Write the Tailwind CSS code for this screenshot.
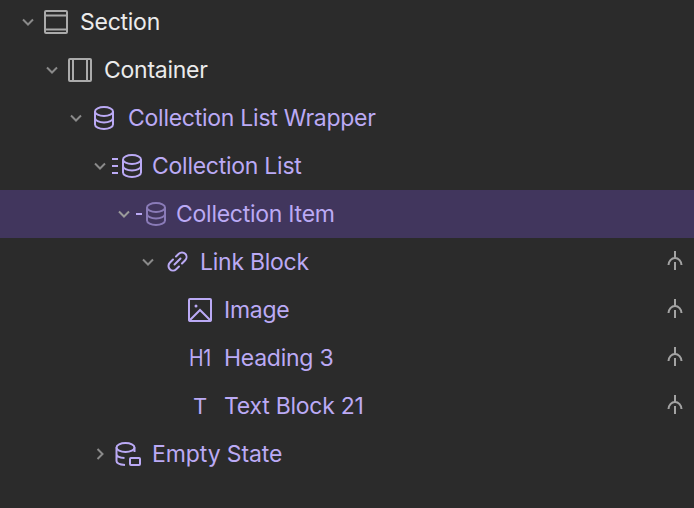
<!DOCTYPE html>
<html lang="en">
<head>
  <meta charset="UTF-8" />
  <title>Navigator</title>
  <script src="https://cdn.jsdelivr.net/npm/@tailwindcss/browser@4"></script>
</head>
<body class="bg-[#2b2b2b] h-[508px] overflow-hidden font-['Inter',sans-serif] text-[23px] tracking-[-0.26px] text-[#bbaaf5]">
  <ul class="-mt-[2px]">
    <!-- Section -->
    <li class="flex items-center h-12 pl-4 text-[#ebebeb]">
      <svg class="w-6 h-6 text-[#8a8a8a]" viewBox="0 0 24 24" fill="none" stroke="currentColor" stroke-width="2"><path d="M7 9.500l5 5 5-5"/></svg>
      <svg class="w-8 h-8 text-[#ababab]" viewBox="0 0 32 32" fill="none" stroke="currentColor" stroke-width="2"><rect x="5" y="5" width="22" height="22" rx="1"/><path d="M5 9.500h22M5 23.500h22"/></svg>
      <span class="ml-2">Section</span>
    </li>
    <!-- Container -->
    <li class="flex items-center h-12 pl-10 text-[#ebebeb]">
      <svg class="w-6 h-6 text-[#8a8a8a]" viewBox="0 0 24 24" fill="none" stroke="currentColor" stroke-width="2"><path d="M7 9.500l5 5 5-5"/></svg>
      <svg class="w-8 h-8 text-[#ababab]" viewBox="0 0 32 32" fill="none" stroke="currentColor" stroke-width="2"><rect x="5" y="5" width="22" height="22" rx="1"/><path d="M9 5v22M23 5v22"/></svg>
      <span class="ml-2">Container</span>
    </li>
    <!-- Collection List Wrapper -->
    <li class="flex items-center h-12 pl-16">
      <svg class="w-6 h-6 text-[#8a8a8a]" viewBox="0 0 24 24" fill="none" stroke="currentColor" stroke-width="2"><path d="M7 9.500l5 5 5-5"/></svg>
      <svg class="w-8 h-8" viewBox="0 0 32 32" fill="none" stroke="currentColor" stroke-width="2"><ellipse cx="16" cy="9.500" rx="9" ry="4.500"/><path d="M7 9.500v13c0 2.500 4 4.500 9 4.500s9-2 9-4.500v-13M7 16c0 2.500 4 4.500 9 4.500s9-2 9-4.500"/></svg>
      <span class="ml-2">Collection List Wrapper</span>
    </li>
    <!-- Collection List -->
    <li class="flex items-center h-12 pl-[88px]">
      <svg class="w-6 h-6 text-[#8a8a8a]" viewBox="0 0 24 24" fill="none" stroke="currentColor" stroke-width="2"><path d="M7 9.500l5 5 5-5"/></svg>
      <svg class="w-8 h-8 shrink-0" viewBox="0 0 32 32" fill="none" stroke="currentColor" stroke-width="2"><ellipse cx="20" cy="9.500" rx="9" ry="4.500"/><path d="M11 9.500v13c0 2.500 4 4.500 9 4.500s9-2 9-4.500v-13M11 16c0 2.500 4 4.500 9 4.500s9-2 9-4.500"/><path d="M0 9h6M0 16h6M0 23h6"/></svg>
      <span class="ml-2">Collection List</span>
    </li>
    <!-- Collection Item (selected) -->
    <li class="flex items-center h-12 pl-28 bg-[#41365d]">
      <svg class="w-6 h-6 text-[#9a9a9a]" viewBox="0 0 24 24" fill="none" stroke="currentColor" stroke-width="2"><path d="M7 9.500l5 5 5-5"/></svg>
      <svg class="w-8 h-8 shrink-0" viewBox="0 0 32 32" fill="none" stroke="currentColor" stroke-width="2"><g class="opacity-60"><ellipse cx="20" cy="9.500" rx="9" ry="4.500"/><path d="M11 9.500v13c0 2.500 4 4.500 9 4.500s9-2 9-4.500v-13M11 16c0 2.500 4 4.500 9 4.500s9-2 9-4.500"/></g><path d="M0 16h6"/></svg>
      <span class="ml-2">Collection Item</span>
    </li>
    <!-- Link Block -->
    <li class="flex items-center h-12 pl-[136px]">
      <svg class="w-6 h-6 text-[#8a8a8a]" viewBox="0 0 24 24" fill="none" stroke="currentColor" stroke-width="2"><path d="M7 9.500l5 5 5-5"/></svg>
      <svg class="w-8 h-8" viewBox="0 0 32 32" fill="none" stroke="currentColor" stroke-width="2" stroke-linecap="round"><path d="M16 10.500l2.800-2.700A4.500 4.500 0 0 1 25.200 14.200L22 17.500"/><path d="M19 20.500l-2.800 2.700A4.500 4.500 0 0 1 9.800 16.800L13 13.500"/><path d="M14.500 18.500l6-6"/></svg>
      <span class="ml-2">Link Block</span>
      <svg class="w-6 h-6 ml-auto mr-[7px] text-[#a3a3a3]" viewBox="0 0 24 24" fill="none" stroke="currentColor" stroke-width="2"><path d="M12 1v7M5.500 15c0-3.800 3-7 6.500-7s6.500 3.200 6.500 7M12 12v8"/></svg>
    </li>
    <!-- Image -->
    <li class="flex items-center h-12 pl-[184px]">
      <svg class="w-8 h-8" viewBox="0 0 32 32" fill="none" stroke="currentColor" stroke-width="2"><rect x="5" y="5" width="22" height="22" rx="1"/><circle cx="12" cy="12" r="1.500" fill="currentColor" stroke="none"/><path d="M5 27l11-11 11 11"/></svg>
      <span class="ml-2">Image</span>
      <svg class="w-6 h-6 ml-auto mr-[7px] text-[#a3a3a3]" viewBox="0 0 24 24" fill="none" stroke="currentColor" stroke-width="2"><path d="M12 1v7M5.500 15c0-3.800 3-7 6.500-7s6.500 3.200 6.500 7M12 12v8"/></svg>
    </li>
    <!-- Heading -->
    <li class="flex items-center h-12 pl-[184px]">
      <span class="w-8 text-center whitespace-nowrap scale-x-[0.85]">H1</span>
      <span class="ml-2">Heading 3</span>
      <svg class="w-6 h-6 ml-auto mr-[7px] text-[#a3a3a3]" viewBox="0 0 24 24" fill="none" stroke="currentColor" stroke-width="2"><path d="M12 1v7M5.500 15c0-3.800 3-7 6.500-7s6.500 3.200 6.500 7M12 12v8"/></svg>
    </li>
    <!-- Text Block -->
    <li class="flex items-center h-12 pl-[184px]">
      <span class="w-8 text-center text-[22px]">T</span>
      <span class="ml-2">Text Block 21</span>
      <svg class="w-6 h-6 ml-auto mr-[7px] text-[#a3a3a3]" viewBox="0 0 24 24" fill="none" stroke="currentColor" stroke-width="2"><path d="M12 1v7M5.500 15c0-3.800 3-7 6.500-7s6.500 3.200 6.500 7M12 12v8"/></svg>
    </li>
    <!-- Empty State -->
    <li class="flex items-center h-12 pl-[88px]">
      <svg class="w-6 h-6 text-[#8a8a8a]" viewBox="0 0 24 24" fill="none" stroke="currentColor" stroke-width="2"><path d="M9.500 7l5 5-5 5"/></svg>
      <svg class="w-8 h-8" viewBox="0 0 32 32" fill="none" stroke="currentColor" stroke-width="2"><path d="M13 27c-3.500-.3-8.500-1.500-8.500-4V9.500M4.500 16c0 2.300 3 3.800 8 4.100M22.500 14V9.500"/><ellipse cx="13.500" cy="9.500" rx="9" ry="4.500"/><rect x="18" y="20" width="10" height="7" rx="1"/></svg>
      <span class="ml-2 tracking-[-0.1px]">Empty State</span>
    </li>
  </ul>
</body>
</html>
